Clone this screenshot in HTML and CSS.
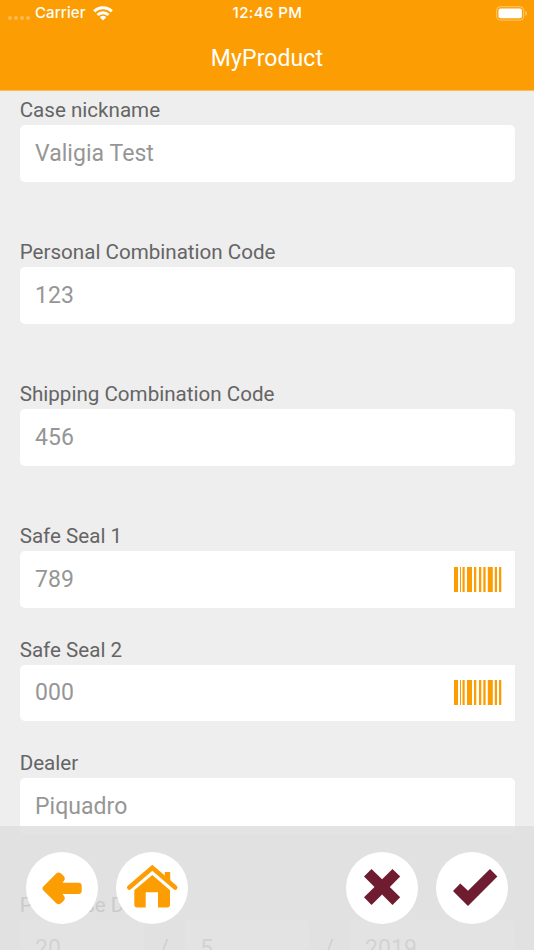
FILE: index.html
```html
<!DOCTYPE html>
<html lang="en">
<head>
<meta charset="utf-8">
<meta name="viewport" content="width=device-width, initial-scale=1">
<title>MyProduct</title>
<link rel="stylesheet" href="styles.css">
</head>
<body>
<svg class="defs" width="0" height="0" aria-hidden="true">
  <symbol id="barcode" viewBox="0 0 48 25">
    <path d="M0 0h4v25H0zM6 0h1v25H6zM8.5 0h2.2v25H8.5zM13 0h5v25h-5zM20 0h2.3v25H20zM25 0h2.3v25H25zM29.3 0h2.3v25h-2.3zM33.8 0h5v25h-5zM40.8 0h2.2v25h-2.2zM45 0h2.3v25H45z"/>
  </symbol>
</svg>
<div class="screen">
  <header class="header">
    <div class="status">
      <div class="carrier">
        <span class="signal"><i></i><i></i><i></i><i></i></span>
        <span class="carrier-name">Carrier</span>
        <svg class="wifi" viewBox="0 0 20 15"><g fill="none" stroke="#fff" stroke-width="3"><path d="M1.2 5.400a12.600 12.600 0 0 1 17.600 0"/><path d="M4.500 9a8 8 0 0 1 11 0"/></g><path fill="#fff" d="M6.800 11.300a4.700 4.700 0 0 1 6.400 0L10 14.500z"/></svg>
      </div>
      <time class="clock">12:46 PM</time>
      <svg class="battery" viewBox="0 0 32 15"><rect x="1.700" y=".7" width="27" height="13.400" rx="3.600" fill="none" stroke="#fff" stroke-opacity=".45"/><rect x="3.500" y="2.500" width="23.400" height="9.800" rx="2" fill="#fff"/><path fill="#fff" fill-opacity=".5" d="M30.300 5c2 .6 2 4.200 0 4.800z"/></svg>
    </div>
    <h1 class="title">MyProduct</h1>
  </header>
  <main class="form">
    <div class="field wide"><div class="label">Case nickname</div><div class="input">Valigia Test</div></div>
    <div class="field wide"><div class="label">Personal Combination Code</div><div class="input">123</div></div>
    <div class="field wide"><div class="label">Shipping Combination Code</div><div class="input">456</div></div>
    <div class="field"><div class="label">Safe Seal 1</div><div class="input scan">789<svg class="barcode"><use href="#barcode"/></svg></div></div>
    <div class="field"><div class="label">Safe Seal 2</div><div class="input scan">000<svg class="barcode"><use href="#barcode"/></svg></div></div>
    <div class="field wide"><div class="label">Dealer</div><div class="input">Piquadro</div></div>
    <div class="field"><div class="label">Purchase Date</div>
      <div class="date"><div class="input">20</div><span class="slash">/</span><div class="input">5</div><span class="slash">/</span><div class="input year">2019</div></div>
    </div>
  </main>
  <nav class="toolbar">
    <div class="group">
      <button class="round" aria-label="Back"><svg viewBox="0 0 72 72"><path fill="#fc9d03" d="M17.500 34.200 30 21.700Q32.300 19.400 34.700 21.200L37.500 23.700Q39.700 26 38.200 28.500L36.500 30.800H52.500Q55.700 30.800 55.700 34V38.700Q55.700 41.900 52.500 41.900H36.500L38.200 44.300Q39.700 46.800 37.500 49L34.700 51.500Q32.300 53.300 30 51L17.500 38.500Q15.400 36.400 17.500 34.200Z"/></svg></button>
      <button class="round" aria-label="Home"><svg viewBox="0 0 72 72"><path fill="none" stroke="#fc9d03" stroke-width="4.600" stroke-linecap="round" d="M13.300 35.500 36.300 15.800 59.200 35.500"/><path fill="#fc9d03" d="M48.800 20h5.400v11l-5.400-4.700zM36.300 23 54 38.200V52.500Q54 55.500 51 55.500H42V40.300H29.700V55.500H21.300Q18.300 55.500 18.300 52.500V38.200Z"/></svg></button>
    </div>
    <div class="group">
      <button class="round" aria-label="Cancel"><svg viewBox="0 0 72 72"><path fill="#701c30" d="m25.500 16.900 10.600 10.400 10.400-10.400 7.700 7.600L43.800 34.900l10.400 10.300-7.700 7.800-10.400-10.400-10.600 10.400-7.500-7.800L28.500 34.900 18 24.500z"/></svg></button>
      <button class="round" aria-label="Confirm"><svg viewBox="0 0 72 72"><path fill="#701c30" d="M24.300 31.600 32 38.800 54 16.900l7.400 7.600L32 53.900 17 38.900z"/></svg></button>
    </div>
  </nav>
</div>
</body>
</html>
```
FILE: styles.css
```css
* { box-sizing: border-box; }
body { margin: 0; background: #eee; font-family: Roboto, "Liberation Sans", sans-serif; }
.defs { display: block; }
.screen { position: relative; width: 534px; height: 950px; overflow: hidden; background: #eee; }
.header { height: 91px; background: #fc9d03; border-bottom: 1px solid #f9bd5d; color: #fff; }
.status { display: grid; grid-template-columns: 1fr auto 1fr; align-items: center; height: 26px; padding: 0 7px 0 8px; font: 450 15px/26px Inter, sans-serif; }
.carrier { display: flex; align-items: center; }
.signal { display: flex; gap: 2px; margin-top: 9px; }
.signal i { width: 4px; height: 4px; border-radius: 50%; background: #fdbb53; }
.carrier-name { margin-left: 5px; letter-spacing: .1px; }
.wifi { width: 20px; height: 15px; margin-left: 7px; }
.clock { letter-spacing: .4px; }
.battery { width: 32px; height: 15px; justify-self: end; }
.title { margin: 17px 0 0; font-size: 23px; line-height: 32px; font-weight: 400; text-align: center; letter-spacing: .1px; }
.form { padding: 4.400px 19.500px 0 19.700px; }
.field { margin-bottom: 27px; }
.field.wide { margin-bottom: 55.400px; }
.label { height: 30px; line-height: 30px; font-size: 20.600px; color: #656565; white-space: nowrap; }
.input { display: flex; align-items: center; height: 56.500px; padding: 0 12.700px 0 15.300px; border-radius: 5px; background: #fff; color: #969696; font-size: 23px; letter-spacing: .05px; }
.scan { justify-content: space-between; border-radius: 5px 0 0 5px; }
.barcode { width: 48px; height: 25px; fill: #fc9d03; }
.date { display: grid; grid-template-columns: 124px 41px 124px 41px 1fr; align-items: center; }
.slash { text-align: center; color: #656565; font-size: 23px; font-weight: 300; }
.toolbar { position: absolute; left: 0; right: 0; bottom: 0; height: 124px; padding: 25.500px 26px 0; display: flex; justify-content: space-between; background: rgba(222, 222, 222, .84); }
.group { display: flex; gap: 18px; }
.round { width: 72px; height: 72px; padding: 0; border: 0; border-radius: 50%; background: #fff; }
.round svg { display: block; width: 72px; height: 72px; }
```
